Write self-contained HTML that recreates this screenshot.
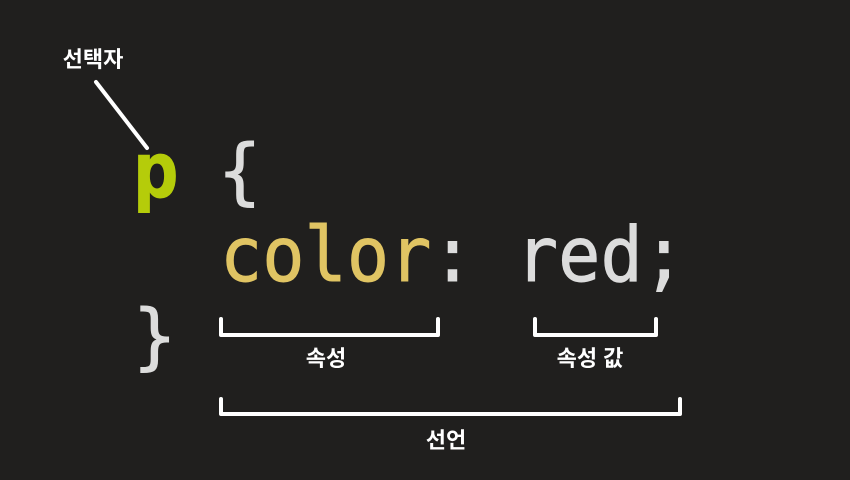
<!DOCTYPE html>
<html><head><meta charset="utf-8"><style>
html,body{margin:0;padding:0;background:#201f1e;}
svg{display:block}
</style></head><body>
<svg width="850" height="480" viewBox="0 0 850 480" xmlns="http://www.w3.org/2000/svg">
<rect width="850" height="480" fill="#201f1e"/>
<g font-family="'DejaVu Sans Mono','Liberation Mono',monospace" font-size="76" stroke-width="0.9">
<text x="133" y="197" fill="#b5cc0a" stroke="#b5cc0a" font-weight="bold">p</text>
<text x="218" y="196" fill="#dcdcdc" stroke="#dcdcdc" font-size="72">{</text>
<text x="220" y="281" textLength="465" lengthAdjust="spacingAndGlyphs"><tspan fill="#e0c463" stroke="#e0c463">color</tspan><tspan fill="#dcdcdc" stroke="#dcdcdc">: red;</tspan></text>
<text x="133" y="361" fill="#dcdcdc" stroke="#dcdcdc" font-size="72">}</text>
</g>
<g stroke="#fff" stroke-width="4" fill="none" stroke-linecap="round" stroke-linejoin="round">
<line x1="96" y1="82" x2="147" y2="148"/>
<path d="M221 319 V335 H438 V319"/>
<path d="M535 319 V335 H656 V319"/>
<path d="M221 399 V414 H680 V399"/>
</g>
<g font-family="'Liberation Sans','Noto Sans CJK KR',sans-serif" font-weight="bold" font-size="22" fill="#fff" text-anchor="middle">
<text x="93" y="67">선택자</text>
<text x="326" y="366">속성</text>
<text x="590" y="366">속성 값</text>
<text x="446" y="448">선언</text>
</g>
</svg>
</body></html>
